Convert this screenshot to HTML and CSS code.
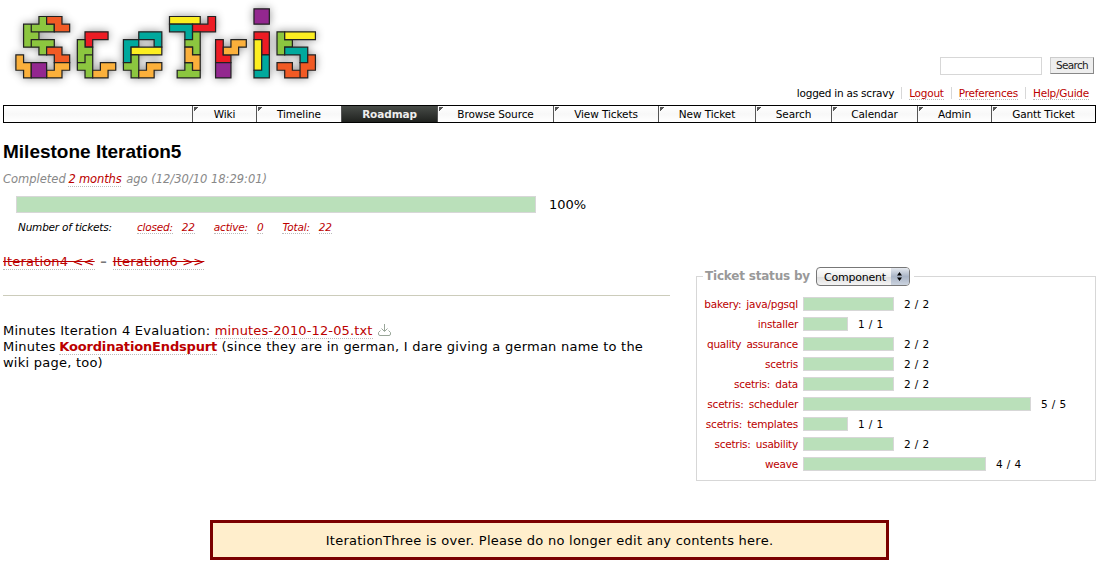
FILE: index.html
```
<!DOCTYPE html>
<html lang="en">
<head>
<meta charset="utf-8">
<title>Milestone Iteration5</title>
<link rel="stylesheet" href="styles.css">
</head>
<body>
<header class="banner">
  <svg class="logo" width="340" height="100" viewBox="0 0 340 100" role="img" aria-label="SceTris">
    <g class="blocks" transform="translate(15.9 16.5) scale(7.68)">
      <path class="g" d="M3 0h1v1h1v1H2V1h1z M1 1h1v1h1v1H2v1H1z M2 3h3v1H4v1H3V4H2z"/>
      <path class="o" d="M4 0h2v1h1v1H5V1H4z M4 4h2v1h1v1H5V5H4z"/>
      <path class="a" d="M0 5h1v1h1v2H1V7H0z M5 6h2v1H6v1H4V7h1z"/>
      <path class="p" d="M2 6h2v2H2z"/>
      <path class="r" d="M9 2h3v1h-2v1H9z"/>
      <path class="g" d="M8 3h1v1h1v1H9v1H8z M9 5h1v3H9V7H8V6h1z"/>
      <path class="a" d="M11 6h2v1h-1v1h-2V7h1z"/>
      <path class="t" d="M16 2h3v2h-1V3h-2z M14 3h2v1h-1v2h-1z"/>
      <path class="y" d="M15 4h4v1h-4z"/>
      <path class="g" d="M15 5h1v3h-1V7h-1V6h1z"/>
      <path class="a" d="M17 6h2v1h-1v1h-2V7h1z"/>
      <path class="y" d="M20 0h4v1h-4z"/>
      <path class="t" d="M20 1h3v2h-1V2h-2z"/>
      <path class="r" d="M25 0h1v2h-3V1h2z"/>
      <path class="g" d="M23 2h1v3h-1V4h-1V3h1z M22 6h1v1h1v1h-3V7h1z"/>
      <path class="a" d="M22 4h1v1h1v2h-1V6h-1z"/>
      <path class="r" d="M26 3h1v2h1v1h-2z"/>
      <path class="a" d="M28 3h2v1h-1v1h-2V4h1z"/>
      <path class="p" d="M26 6h2v2h-2z M31 -1h2v2h-2z"/>
      <path class="r" d="M31 2h2v3h-1V3h-1z"/>
      <path class="y" d="M31 3h1v4h-1z"/>
      <path class="t" d="M32 5h1v3h-2V7h1z"/>
      <path class="g" d="M34 2h1v1h1v1h-1v1h-1z"/>
      <path class="y" d="M35 2h4v1h-4z"/>
      <path class="t" d="M35 4h3v2h-1V5h-2z"/>
      <path class="o" d="M38 5h1v2h-1v1h-1V6h1z M34 6h2v1h1v1h-2V7h-1z"/>
    </g>
  </svg>
  <div class="tools">
    <form class="search"><input class="query" type="text" aria-label="Search"><button class="go" type="button">Search</button></form>
    <ul class="metanav">
      <li>logged in as scravy</li>
      <li><a>Logout</a></li>
      <li><a>Preferences</a></li>
      <li><a>Help/Guide</a></li>
    </ul>
  </div>
</header>
<nav class="mainnav">
  <a class="w64">Wiki</a><a class="w85">Timeline</a><a class="w96 active">Roadmap</a><a class="w116">Browse Source</a><a class="w105">View Tickets</a><a class="w97">New Ticket</a><a class="w76">Search</a><a class="w86">Calendar</a><a class="w74">Admin</a><a class="w104">Gantt Ticket</a>
</nav>
<main class="content">
  <section class="milestone">
    <h1>Milestone Iteration5</h1>
    <p class="date">Completed <a>2 months</a> ago (12/30/10 18:29:01)</p>
    <div class="progress"><div class="bar"></div><span>100%</span></div>
    <dl class="counts">
      <dt class="label">Number of tickets:</dt>
      <dt><a>closed:</a></dt><dd><a>22</a></dd>
      <dt><a>active:</a></dt><dd><a>0</a></dd>
      <dt><a>Total:</a></dt><dd><a>22</a></dd>
    </dl>
    <p class="siblings"><a>Iteration4 &lt;&lt;</a><span class="dash">–</span><a>Iteration6 &gt;&gt;</a></p>
    <hr>
    <p class="notes">Minutes Iteration 4 Evaluation: <a class="file">minutes-2010-12-05.txt</a><svg class="download" width="13" height="12" viewBox="0 0 13 12"><path d="M6.5 0v7M3.500 4.500l3 3 3-3M2.500 6.500L.5 8.500V10q0 1.500 1.500 1.500h9q1.500 0 1.500-1.500V8.500L10.500 6.500"/></svg><br>
    Minutes <a class="strong">KoordinationEndspurt</a> (since they are in german, I dare giving a german name to the<br>wiki page, too)</p>
  </section>
  <section class="stats">
    <div class="legend"><span class="by">Ticket status by</span><span class="select">Component<span class="arrows"><svg width="7" height="11" viewBox="0 0 7 11"><path d="M3.500 1L6 4.500H1zM3.500 10L1 6.500h5z"/></svg></span></span></div>
    <div class="rows">
      <div class="row"><a>bakery: java/pgsql</a><i style="width:91px"></i><span>2 / 2</span></div>
      <div class="row"><a>installer</a><i style="width:45px"></i><span>1 / 1</span></div>
      <div class="row"><a>quality assurance</a><i style="width:91px"></i><span>2 / 2</span></div>
      <div class="row"><a>scetris</a><i style="width:91px"></i><span>2 / 2</span></div>
      <div class="row"><a>scetris: data</a><i style="width:91px"></i><span>2 / 2</span></div>
      <div class="row"><a>scetris: scheduler</a><i style="width:228px"></i><span>5 / 5</span></div>
      <div class="row"><a>scetris: templates</a><i style="width:45px"></i><span>1 / 1</span></div>
      <div class="row"><a>scetris: usability</a><i style="width:91px"></i><span>2 / 2</span></div>
      <div class="row"><a>weave</a><i style="width:183px"></i><span>4 / 4</span></div>
    </div>
  </section>
</main>
<footer class="notice">IterationThree is over. Please do no longer edit any contents here.</footer>
</body>
</html>
```
FILE: styles.css
```
* { box-sizing: border-box; }
body { margin: 0; padding: 0 6px 0 3px; height: 571px; overflow: hidden; background: #fff; color: #000; font: 13px/16px Verdana, "DejaVu Sans", sans-serif; }
a { color: #b00; }
p, h1, dl, dd, ul { margin: 0; padding: 0; }

.banner { display: flex; justify-content: space-between; height: 105px; }
.logo { margin-left: -3px; flex: none; }
.blocks { stroke: #222; stroke-width: .16; filter: drop-shadow(.1px .15px .55px rgba(0,0,0,.42)); }
.g { fill: #8cc63f; }
.o { fill: #f15a24; }
.a { fill: #fbb03b; }
.p { fill: #93278f; }
.r { fill: #ed1c24; }
.t { fill: #00a99d; }
.y { fill: #fcee21; }
.tools { display: flex; flex-direction: column; align-items: flex-end; padding-top: 57px; }
.search { display: flex; gap: 8px; margin-right: 2px; }
.query { width: 102px; height: 18px; border: 1px solid #d7d7d7; padding: 0; }
.go { width: 44px; height: 17px; padding: 0 0 1px; border: 1px solid; border-color: #ccc #888 #888 #ccc; background: #eee; color: #222; font: 10.500px/14px "DejaVu Sans", sans-serif; letter-spacing: -.7px; }
.metanav { display: flex; list-style: none; margin-top: 12px; font-size: 10.500px; line-height: 12px; letter-spacing: -.23px; }
.metanav li { padding: 0 7px; border-left: 1px solid #d7d7d7; height: 12px; }
.metanav li:first-child { border: 0; }
.metanav a { display: block; border-bottom: 1px dotted #bbb; height: 13px; }

.mainnav { display: flex; justify-content: flex-end; height: 18px; border: 1px solid #000; background: linear-gradient(#fff, #f8f8f8 50%, #fff); font-size: 10.500px; line-height: 17px; letter-spacing: -.1px; }
.mainnav a { border-left: 1px solid #555; color: #000; text-align: center; background: linear-gradient(135deg, #555 3px, transparent 3.500px) 1px 1px / 6px 6px no-repeat; }
.mainnav .active { background: linear-gradient(#484c48, #20221f); color: #eee; font-weight: bold; }
.w64 { width: 64px; }
.w85 { width: 85px; }
.w96 { width: 96px; }
.w116 { width: 116px; }
.w105 { width: 105px; }
.w97 { width: 97px; }
.w76 { width: 76px; }
.w86 { width: 86px; }
.w74 { width: 74px; }
.w104 { width: 104px; }

.content { display: flex; justify-content: space-between; height: 397px; }
.milestone { width: 667px; padding-top: 17px; }
h1 { font: bold 19px/23px Arial, "Liberation Sans", sans-serif; }
.date { margin-top: 8px; color: #888; font-size: 11.500px; line-height: 16px; font-style: italic; }
.date a { letter-spacing: -.15px; margin: 0 1px 0 -1px; }
.date a, .counts a, .siblings a, .notes a { border-bottom: 1px dotted #bbb; }
.progress { display: flex; gap: 13px; margin: 9px 0 0 13px; line-height: 17px; }
.bar { width: 520px; height: 17px; border: 1px solid #d7d7d7; background: #bae0ba; }
.counts { display: flex; margin: 8px 0 0 15px; font-size: 10.500px; line-height: 13px; font-style: italic; letter-spacing: -.2px; }
.counts .label { width: 119px; margin: 0; }
.counts dd { margin: 0 19px 0 9px; }
.siblings { margin-top: 20px; color: #777; letter-spacing: .18px; }
.siblings a { text-decoration: line-through; }
.dash { display: inline-block; width: 18px; text-align: center; font-weight: bold; }
hr { margin: 25px 0 0; border: 0; height: 1px; background: #ccccbb; }
.notes { margin-top: 27px; white-space: nowrap; letter-spacing: .24px; }
.notes .file { letter-spacing: .13px; }
.notes .strong { font-weight: bold; letter-spacing: -.16px; margin-left: -1px; }
.download { margin-left: 5px; vertical-align: -1px; fill: none; stroke: #99a699; }

.stats { width: 400px; height: 205px; margin-top: 153px; border: 1px solid #d7d7d7; border-top: 0; }
.legend { display: flex; align-items: center; height: 20px; margin-top: -10px; color: #999; font-weight: bold; }
.legend::before { content: ""; width: 6px; height: 1px; background: #d7d7d7; }
.legend::after { content: ""; flex: 1; height: 1px; margin-left: 4px; background: #d7d7d7; }
.by { padding-left: 2px; white-space: nowrap; font-size: 12px; letter-spacing: -.2px; }
.select { display: flex; justify-content: space-between; width: 94px; height: 19px; margin-left: 6px; padding-left: 7px; border: 1px solid #777; border-radius: 4px; background: linear-gradient(#fff, #eee 50%, #ddd 52%, #f4f4f4); color: #000; font-size: 11px; font-weight: normal; letter-spacing: -.2px; line-height: 19px; overflow: hidden; }
.arrows { display: flex; align-items: center; justify-content: center; width: 18px; background: linear-gradient(#e5e9ef, #a9b4c5 50%, #cbd3df); }
.rows { padding-top: 11px; font-size: 10.500px; line-height: 14px; }
.row { display: flex; height: 20px; }
.row a { width: 101px; margin-right: 5px; text-align: right; white-space: nowrap; letter-spacing: -.23px; word-spacing: 2px; }
.row i { height: 14px; margin-right: 10px; border: 1px solid #d7d7d7; background: #bae0ba; }
.row span { word-spacing: .8px; }

.notice { width: 679px; height: 40px; margin: 0 auto 0 207px; border: 3px solid #7b0000; background: #ffeecc; line-height: 35px; text-align: center; letter-spacing: .25px; }
```
